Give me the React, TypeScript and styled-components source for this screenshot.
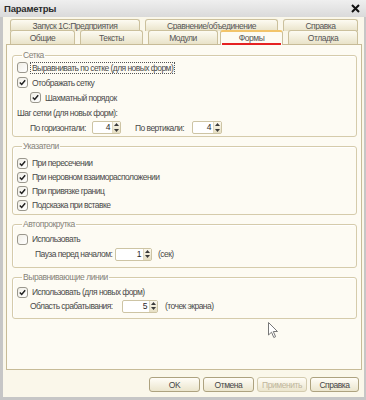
import React from 'react'
import styled, { createGlobalStyle } from 'styled-components'

const GlobalStyle = createGlobalStyle`
  html, body { margin: 0; padding: 0; background: #fff; }
  body { font-family: "Liberation Sans", Arial, sans-serif; }
  * { box-sizing: border-box; }
`

const Window = styled.div`
  position: relative;
  width: 366px;
  height: 400px;
  display: flex;
  flex-direction: column;
  background: #c6c6c6;
  overflow: hidden;
`

const TitleBar = styled.div`
  height: 17px;
  flex: none;
  display: flex;
  align-items: center;
  justify-content: space-between;
  padding: 0 6px 0 4px;
  background: linear-gradient(#efefef, #dadada);
  font-size: 9.5px;
  font-weight: bold;
  letter-spacing: -0.2px;
  color: #2c2c2c;
`

const Body = styled.div`
  flex: 1;
  display: flex;
  flex-direction: column;
  margin: 0 2px 3px 3px;
  padding: 2px 2px 0 3px;
  background: #faf7ea;
`

const TabRow = styled.div<{ $h: number }>`
  display: flex;
  gap: 5px;
  height: ${p => p.$h}px;
  padding-left: 4px;
  & + & { margin-top: -1px; }
`

const Tab = styled.div<{ $w: number; $active?: boolean; $ml?: number }>`
  width: ${p => p.$w}px;
  margin-left: ${p => p.$ml || 0}px;
  display: flex;
  flex-direction: column;
  align-items: stretch;
  justify-content: center;
  text-align: center;
  font-size: 8.5px;
  letter-spacing: -0.45px;
  color: #555;
  border: 1px solid #cbc09c;
  border-bottom: none;
  border-radius: 3px 3px 0 0;
  background: ${p => p.$active ? '#fdfbf3' : 'linear-gradient(#fdfbf2, #e9e3c9)'};
  border-top: ${p => p.$active ? '2px solid #f2c46a' : '1px solid #cbc09c'};
  position: relative;
  z-index: ${p => p.$active ? 2 : 1};
  height: ${p => p.$active ? 'calc(100% + 1px)' : '100%'};
`

const ActiveMark = styled.span`
  display: block;
  margin: 2px 1px 0;
  border-bottom: 2px solid #e52121;
  line-height: 9px;
`

const Panel = styled.div`
  height: 326px;
  border: 1px solid #c7bb97;
  background: #fdfbf3;
  padding: 5px 4px 0 5px;
  display: flex;
  flex-direction: column;
  gap: 4px;
`

const Group = styled.fieldset<{ $pt: number; $pb: number }>`
  margin: 0;
  min-width: 0;
  padding: ${p => p.$pt}px 4px ${p => p.$pb}px 4px;
  border: 1px solid #d5cbab;
  border-radius: 3px;
  box-shadow: inset 1px 1px 0 #fff;
`

const Legend = styled.legend`
  margin-left: 5px;
  padding: 0 1px;
  font-size: 8.5px;
  line-height: 10px;
  letter-spacing: -0.45px;
  color: #858277;
`

const Row = styled.div<{ $h: number; $indent?: number }>`
  display: flex;
  align-items: center;
  height: ${p => p.$h}px;
  padding-left: ${p => p.$indent || 0}px;
  font-size: 8.5px;
  letter-spacing: -0.55px;
  color: #4a4a4a;
  white-space: nowrap;
`

const Box = styled.span`
  width: 11px;
  height: 11px;
  flex: none;
  display: flex;
  align-items: center;
  justify-content: center;
  border: 1px solid #9a978d;
  border-radius: 3px;
  background: linear-gradient(135deg, #f0eee6, #ffffff);
  margin-right: 2px;
`

const CheckText = styled.span<{ $focus?: boolean }>`
  border: 1px dotted ${p => p.$focus ? '#555' : 'transparent'};
  padding: 0 1px;
  line-height: 10px;
`

const Label = styled.span<{ $w: number }>`
  width: ${p => p.$w}px;
  flex: none;
`

const Spin = styled.span<{ $w: number }>`
  width: ${p => p.$w}px;
  height: 13px;
  flex: none;
  display: flex;
  border: 1px solid #cdc4a4;
  border-radius: 2px;
  background: #fff;
`

const SpinValue = styled.span`
  flex: 1;
  text-align: right;
  padding-right: 2px;
  line-height: 11px;
  color: #2a2a2a;
`

const SpinButtons = styled.span`
  width: 8px;
  display: flex;
  flex-direction: column;
  justify-content: space-around;
  align-items: center;
  background: linear-gradient(#fbf8ee, #e6dfc3);
  border-left: 1px solid #e2dac0;
`

const Unit = styled.span<{ $gap: number }>`
  margin-left: ${p => p.$gap}px;
`

const Buttons = styled.div`
  display: flex;
  justify-content: flex-end;
  gap: 3px;
  padding: 7px 3px 0 0;
`

const Button = styled.div<{ $w: number; $disabled?: boolean }>`
  width: ${p => p.$w}px;
  height: 15px;
  display: flex;
  align-items: center;
  justify-content: center;
  font-size: 8.5px;
  letter-spacing: -0.45px;
  color: ${p => p.$disabled ? '#c0b69b' : '#454545'};
  border: 1px solid ${p => p.$disabled ? '#d3cbae' : '#ada27f'};
  border-radius: 3px;
  background: linear-gradient(#fffdf7, #ebe5cd);
`

const Cursor = styled.svg`
  position: absolute;
  left: 268px;
  top: 322px;
`

const Check = ({ on }: { on: boolean }) => (
  <Box>
    {on && (
      <svg width="7" height="7" viewBox="0 0 7 7">
        <path d="M0.8 3.4 L2.7 5.4 L6.2 1.2" fill="none" stroke="#222" strokeWidth="1.5" />
      </svg>
    )}
  </Box>
)

const CheckRow = ({ on, text, indent = 0, h = 14, focus }: { on: boolean; text: string; indent?: number; h?: number; focus?: boolean }) => (
  <Row $h={h} $indent={indent}>
    <Check on={on} />
    <CheckText $focus={focus}>{text}</CheckText>
  </Row>
)

const Spinner = ({ w, value }: { w: number; value: string }) => (
  <Spin $w={w}>
    <SpinValue>{value}</SpinValue>
    <SpinButtons>
      <svg width="5" height="3" viewBox="0 0 5 3"><path d="M0 3 L2.5 0 L5 3 Z" fill="#3b3b3b" /></svg>
      <svg width="5" height="3" viewBox="0 0 5 3"><path d="M0 0 L2.5 3 L5 0 Z" fill="#3b3b3b" /></svg>
    </SpinButtons>
  </Spin>
)

export default function App() {
  return (
    <>
      <GlobalStyle />
      <Window>
        <TitleBar>
          <span>Параметры</span>
          <svg width="9" height="9" viewBox="0 0 9 9">
            <path d="M1 1 L8 8 M8 1 L1 8" stroke="#111" strokeWidth="2" />
          </svg>
        </TitleBar>
        <Body>
          <TabRow $h={12}>
            <Tab $w={130}>Запуск 1С:Предприятия</Tab>
            <Tab $w={133}>Сравнение/объединение</Tab>
            <Tab $w={75}>Справка</Tab>
          </TabRow>
          <TabRow $h={14}>
            <Tab $w={65}>Общие</Tab>
            <Tab $w={63}>Тексты</Tab>
            <Tab $w={70}>Модули</Tab>
            <Tab $w={63} $ml={-3} $active><ActiveMark>Формы</ActiveMark></Tab>
            <Tab $w={70}>Отладка</Tab>
          </TabRow>
          <Panel>
            <Group $pt={0} $pb={1}>
              <Legend>Сетка</Legend>
              <CheckRow h={15} on={false} focus text="Выравнивать по сетке (для новых форм)" />
              <CheckRow h={15} on text="Отображать сетку" />
              <CheckRow h={15} on indent={13} text="Шахматный порядок" />
              <Row $h={15}>Шаг сетки (для новых форм):</Row>
              <Row $h={15} $indent={13}>
                <Label $w={62}>По горизонтали:</Label>
                <Spinner w={29} value="4" />
                <Label $w={57} style={{ marginLeft: 14 }}>По вертикали:</Label>
                <Spinner w={30} value="4" />
              </Row>
            </Group>
            <Group $pt={5} $pb={2}>
              <Legend>Указатели</Legend>
              <CheckRow on text="При пересечении" />
              <CheckRow on text="При неровном взаиморасположении" />
              <CheckRow on text="При привязке границ" />
              <CheckRow on text="Подсказка при вставке" />
            </Group>
            <Group $pt={3} $pb={5}>
              <Legend>Автопрокрутка</Legend>
              <CheckRow on={false} text="Использовать" />
              <Row $h={16} $indent={18}>
                <Label $w={80}>Пауза перед началом:</Label>
                <Spinner w={37} value="1" />
                <Unit $gap={6}>(сек)</Unit>
              </Row>
            </Group>
            <Group $pt={3} $pb={5}>
              <Legend>Выравнивающие линии</Legend>
              <CheckRow on text="Использовать (для новых форм)" />
              <Row $h={14} $indent={13}>
                <Label $w={92}>Область срабатывания:</Label>
                <Spinner w={36} value="5" />
                <Unit $gap={7}>(точек экрана)</Unit>
              </Row>
            </Group>
          </Panel>
          <Buttons>
            <Button $w={51}>OK</Button>
            <Button $w={51}>Отмена</Button>
            <Button $w={50} $disabled>Применить</Button>
            <Button $w={49}>Справка</Button>
          </Buttons>
        </Body>
        <Cursor width="11" height="17" viewBox="0 0 11 17">
          <path d="M0.5 0.5 L0.5 13 L3.5 10.2 L5.8 15.5 L7.6 14.7 L5.3 9.5 L9.5 9.5 Z" fill="#fff" stroke="#777" strokeWidth="1" />
        </Cursor>
      </Window>
    </>
  )
}
